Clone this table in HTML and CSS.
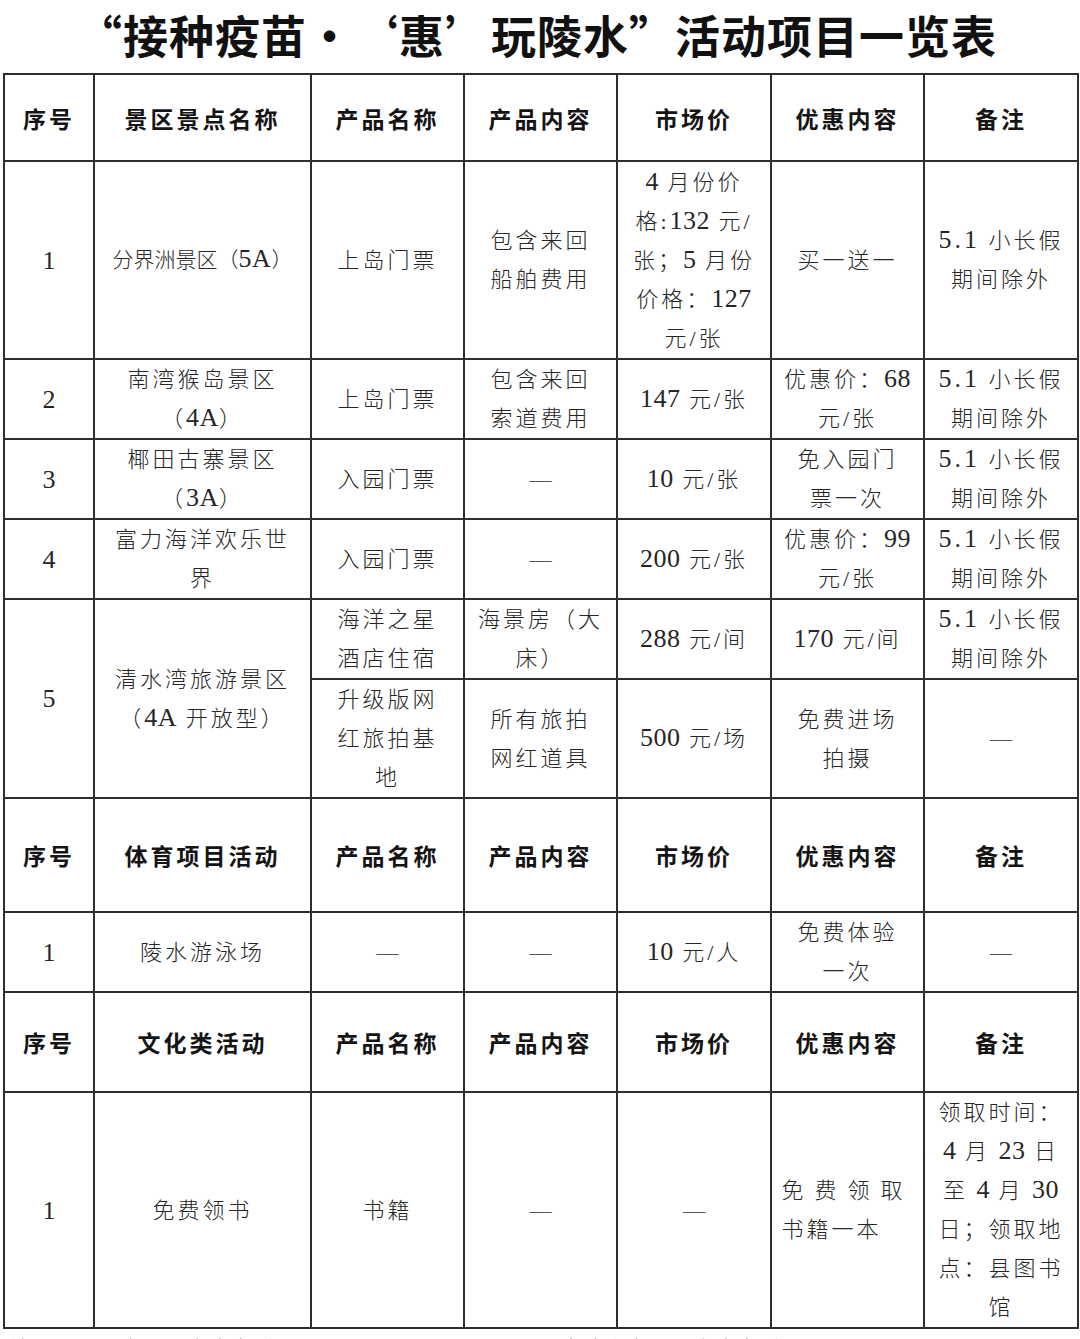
FILE: index.html
```html
<!DOCTYPE html>
<html lang="zh-CN">
<head>
<meta charset="utf-8">
<title>“接种疫苗•‘惠’玩陵水”活动项目一览表</title>
<link rel="stylesheet" href="styles.css">
</head>
<body>
<h1 class="title">“接种疫苗•‘惠’玩陵水”活动项目一览表</h1>
<table class="sheet">
  <colgroup>
    <col class="c1"><col class="c2"><col class="c3"><col class="c4"><col class="c5"><col class="c6"><col class="c7">
  </colgroup>
  <tbody>
    <tr class="h-head1">
      <th>序号</th><th>景区景点名称</th><th>产品名称</th><th>产品内容</th><th>市场价</th><th>优惠内容</th><th>备注</th>
    </tr>
    <tr class="h-r1">
      <td class="num">1</td>
      <td class="tight">分界洲景区（<span class="n">5A</span>）</td>
      <td>上岛门票</td>
      <td>包含来回<br>船舶费用</td>
      <td><span class="n">4</span> 月份价<br>格:<span class="n">132</span> 元/<br>张；<span class="n">5</span> 月份<br>价格：<span class="n">127</span><br>元/张</td>
      <td>买一送一</td>
      <td><span class="n s">5.1</span> 小长假<br>期间除外</td>
    </tr>
    <tr class="h-80">
      <td class="num">2</td>
      <td>南湾猴岛景区<br>（<span class="n">4A</span>）</td>
      <td>上岛门票</td>
      <td>包含来回<br>索道费用</td>
      <td><span class="n">147</span> 元/张</td>
      <td>优惠价：<span class="n">68</span><br>元/张</td>
      <td><span class="n s">5.1</span> 小长假<br>期间除外</td>
    </tr>
    <tr class="h-80">
      <td class="num">3</td>
      <td>椰田古寨景区<br>（<span class="n">3A</span>）</td>
      <td>入园门票</td>
      <td class="dash">—</td>
      <td><span class="n">10</span> 元/张</td>
      <td>免入园门<br>票一次</td>
      <td><span class="n s">5.1</span> 小长假<br>期间除外</td>
    </tr>
    <tr class="h-80">
      <td class="num">4</td>
      <td>富力海洋欢乐世<br>界</td>
      <td>入园门票</td>
      <td class="dash">—</td>
      <td><span class="n">200</span> 元/张</td>
      <td>优惠价：<span class="n">99</span><br>元/张</td>
      <td><span class="n s">5.1</span> 小长假<br>期间除外</td>
    </tr>
    <tr class="h-80">
      <td class="num" rowspan="2">5</td>
      <td rowspan="2">清水湾旅游景区<br>（<span class="n">4A</span> 开放型）</td>
      <td>海洋之星<br>酒店住宿</td>
      <td>海景房（大<br>床）</td>
      <td><span class="n">288</span> 元/间</td>
      <td><span class="n">170</span> 元/间</td>
      <td><span class="n s">5.1</span> 小长假<br>期间除外</td>
    </tr>
    <tr class="h-r5b">
      <td>升级版网<br>红旅拍基<br>地</td>
      <td>所有旅拍<br>网红道具</td>
      <td><span class="n">500</span> 元/场</td>
      <td>免费进场<br>拍摄</td>
      <td class="dash">—</td>
    </tr>
    <tr class="h-head2">
      <th>序号</th><th>体育项目活动</th><th>产品名称</th><th>产品内容</th><th>市场价</th><th>优惠内容</th><th>备注</th>
    </tr>
    <tr class="h-80">
      <td class="num">1</td>
      <td>陵水游泳场</td>
      <td class="dash">—</td>
      <td class="dash">—</td>
      <td><span class="n">10</span> 元/人</td>
      <td>免费体验<br>一次</td>
      <td class="dash">—</td>
    </tr>
    <tr class="h-head3">
      <th>序号</th><th>文化类活动</th><th>产品名称</th><th>产品内容</th><th>市场价</th><th>优惠内容</th><th>备注</th>
    </tr>
    <tr class="h-last">
      <td class="num">1</td>
      <td>免费领书</td>
      <td>书籍</td>
      <td class="dash">—</td>
      <td class="dash">—</td>
      <td><span class="block-left"><span class="wide">免费领取</span><br>书籍一本</span></td>
      <td>领取时间：<br><span class="n">4</span> 月 <span class="n">23</span> 日<br>至 <span class="n">4</span> 月 <span class="n">30</span><br>日；领取地<br>点：县图书<br>馆</td>
    </tr>
  </tbody>
</table>
<p class="note"><span class="note-a">注：分界洲岛景区咨询电话：</span><span class="note-b">南湾猴岛景区咨询电话：</span></p>
</body>
</html>
```

FILE: styles.css
```css
html, body {
  margin: 0;
  padding: 0;
  background: #ffffff;
}

body {
  width: 1080px;
  height: 1339px;
  overflow: hidden;
  font-family: "Liberation Serif", "Noto Sans CJK SC", serif;
  color: #1e1e1e;
}

.title {
  margin: 0;
  height: 73px;
  line-height: 70px;
  text-align: center;
  font-family: "Noto Sans CJK SC", sans-serif;
  font-weight: 700;
  font-size: 45px;
  letter-spacing: 1px;
  color: #111111;
  padding-right: 6px;
}

.sheet {
  margin-left: 3px;
  width: 1074px;
  table-layout: fixed;
  border-collapse: collapse;
}

.c1 { width: 90px; }
.c2 { width: 217px; }
.c3 { width: 153px; }
.c4 { width: 153px; }
.c5 { width: 154px; }
.c6 { width: 153px; }
.c7 { width: 154px; }

.sheet th,
.sheet td {
  border: 2px solid #2e2e2e;
  padding: 0;
  text-align: center;
  vertical-align: middle;
  white-space: nowrap;
}

.sheet th {
  font-family: "Noto Sans CJK SC", sans-serif;
  font-weight: 700;
  font-size: 23px;
  letter-spacing: 3px;
  color: #141414;
  line-height: 30px;
}

.sheet td {
  font-weight: 300;
  font-size: 22px;
  line-height: 39px;
  letter-spacing: 3px;
  color: #262626;
}

.sheet td.num {
  font-size: 26px;
  letter-spacing: 0;
  font-weight: 400;
}

.n {
  font-size: 26px;
  font-weight: 400;
  line-height: 10px;
  letter-spacing: 0.5px;
}

.n.s {
  letter-spacing: 3px;
}

.sheet td.tight {
  letter-spacing: 0;
  font-size: 21px;
}

.sheet td.dash {
  color: #555555;
  letter-spacing: 0;
}

.h-head1 { height: 87px; }
.h-r1 { height: 198px; }
.h-80 { height: 80px; }
.h-r5b { height: 119px; }
.h-head2 { height: 114px; }
.h-head3 { height: 100px; }
.h-last { height: 236px; }

.block-left {
  display: inline-block;
  text-align: left;
}

.wide {
  letter-spacing: 11px;
}

.note {
  margin: 3px 0 0 0;
  font-family: "Noto Sans CJK SC", sans-serif;
  font-weight: 300;
  font-size: 22px;
  line-height: 30px;
  color: #333333;
  white-space: nowrap;
}

.note-a {
  display: inline-block;
  padding-left: 10px;
  width: 550px;
}
```
